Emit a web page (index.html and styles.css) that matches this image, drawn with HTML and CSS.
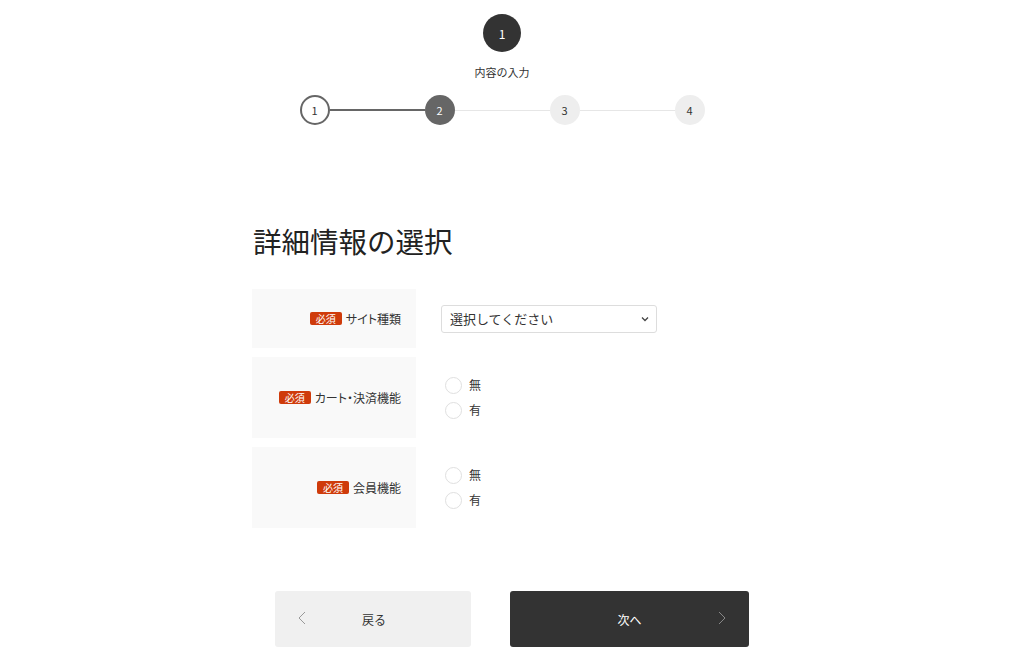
FILE: index.html
```html
<!DOCTYPE html>
<html lang="ja">
<head>
<meta charset="utf-8">
<link rel="stylesheet" href="styles.css">
</head>
<body>
<div class="page">
  <div class="current">
    <div class="current-num">1</div>
    <div class="current-label">内容の入力</div>
  </div>
  <div class="steps">
    <div class="step done">1</div>
    <div class="line dark"></div>
    <div class="step active">2</div>
    <div class="line"></div>
    <div class="step">3</div>
    <div class="line"></div>
    <div class="step">4</div>
  </div>

  <section class="form-area">
    <h1 class="title">詳細情報の選択</h1>
    <div class="form">
      <div class="row row-select">
        <div class="label"><span class="req">必須</span><span>サイト種類</span></div>
        <div class="field">
          <div class="select"><span>選択してください</span>
            <svg class="caret" width="8" height="6" viewBox="0 0 8 6"><polyline points="1,1.5 4,4.5 7,1.5" fill="none" stroke="#444" stroke-width="1.3"/></svg>
          </div>
        </div>
      </div>
      <div class="row">
        <div class="label"><span class="req">必須</span><span>カート・決済機能</span></div>
        <div class="field radios">
          <label class="radio"><span class="dot"></span><span>無</span></label>
          <label class="radio"><span class="dot"></span><span>有</span></label>
        </div>
      </div>
      <div class="row">
        <div class="label"><span class="req">必須</span><span>会員機能</span></div>
        <div class="field radios">
          <label class="radio"><span class="dot"></span><span>無</span></label>
          <label class="radio"><span class="dot"></span><span>有</span></label>
        </div>
      </div>
    </div>
  </section>

  <div class="buttons">
    <div class="btn back">
      <svg class="chev left" width="8" height="14" viewBox="0 0 8 14"><polyline points="7,1 1,7 7,13" fill="none" stroke="#999" stroke-width="1"/></svg>
      <span>戻る</span>
    </div>
    <div class="btn next">
      <span>次へ</span>
      <svg class="chev right" width="8" height="14" viewBox="0 0 8 14"><polyline points="1,1 7,7 1,13" fill="none" stroke="#888" stroke-width="1"/></svg>
    </div>
  </div>
</div>
</body>
</html>
```
FILE: styles.css
```css
* { box-sizing: border-box; }
html, body { margin: 0; padding: 0; background: #fff; }
body {
  font-family: "Noto Sans CJK JP", "Noto Sans", sans-serif;
  color: #333;
  width: 1024px;
  height: 672px;
  overflow: hidden;
}
.page { display: flex; flex-direction: column; align-items: center; }

.current { display: flex; flex-direction: column; align-items: center; margin-top: 14px; margin-left: -20px; }
.current-num {
  width: 38px; height: 38px; border-radius: 50%;
  background: #333; color: #fff;
  display: flex; align-items: center; justify-content: center;
  font-size: 12px;
}
.current-label { margin-top: 12px; font-size: 11px; line-height: 16px; color: #333; }

.steps { display: flex; align-items: center; margin-top: 15px; margin-left: -20px; }
.step {
  width: 30px; height: 30px; border-radius: 50%;
  background: #eee; color: #333;
  display: flex; align-items: center; justify-content: center;
  font-size: 11px;
}
.step.done { background: #fff; border: 2px solid #666; }
.step.active { background: #666; color: #fff; }
.line { width: 95px; height: 1px; background: #e6e6e6; }
.line.dark { height: 2px; background: #666; }

.form-area { width: 520px; margin-top: 96px; }
.title { margin: 0 0 28px 1px; font-size: 28.5px; font-weight: 400; line-height: 40px; color: #222; }

.form { display: flex; flex-direction: column; gap: 9px; }
.row { display: flex; min-height: 81px; }
.row-select { min-height: 59px; }
.label {
  width: 164px; background: #f9f9f9;
  display: flex; align-items: center; justify-content: flex-end;
  padding-right: 15px; gap: 4px;
  font-size: 12px; color: #333;
  font-feature-settings: "palt";
}
.req {
  background: #cf3b0b; color: #fff; font-size: 10px;
  line-height: 13px; padding: 0 6px; border-radius: 2px;
  font-feature-settings: normal;
}
.field { flex: 1; display: flex; align-items: center; padding-left: 25px; }
.select {
  width: 216px; height: 28px; border: 1px solid #ddd; border-radius: 3px;
  display: flex; align-items: center; justify-content: space-between;
  padding: 0 7px 0 8px; font-size: 13px; color: #333;
}
.caret { display: block; }
.radios { flex-direction: column; align-items: flex-start; justify-content: center; gap: 7px; padding-left: 29px; }
.radio { display: flex; align-items: center; gap: 7px; font-size: 12px; line-height: 18px; }
.dot { width: 17px; height: 17px; border-radius: 50%; border: 1px solid #e0e0e0; background: #fff; }

.buttons { display: flex; gap: 39px; margin-top: 63px; }
.btn {
  height: 56px; border-radius: 3px;
  display: flex; align-items: center; position: relative;
  font-size: 12px;
}
.btn.back { width: 196px; background: #f0f0f0; color: #333; justify-content: center; padding-left: 2px; }
.btn.next { width: 239px; background: #333; color: #fff; justify-content: center; }
.chev { position: absolute; top: 20px; }
.chev.left { left: 23px; }
.chev.right { right: 23px; }
```
